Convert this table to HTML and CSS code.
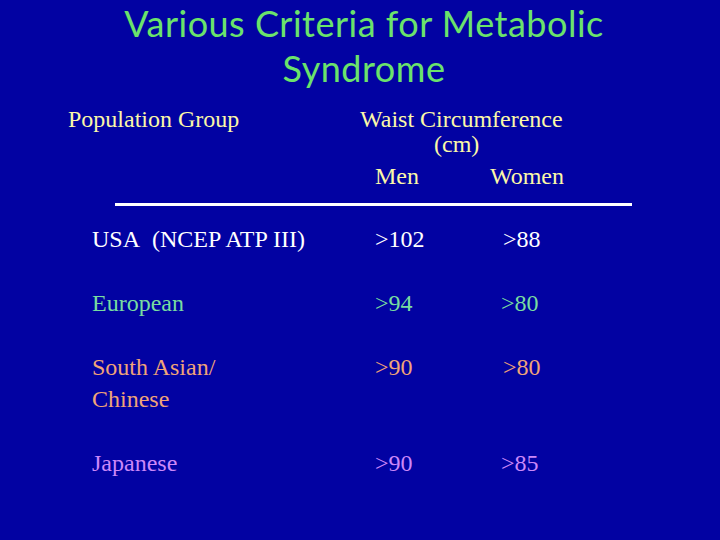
FILE: index.html
```html
<!DOCTYPE html>
<html>
<head>
<meta charset="utf-8">
<link rel="stylesheet" href="styles.css">
</head>
<body>
<div class="slide">
  <h1 class="title">Various Criteria for Metabolic<br>Syndrome</h1>
  <div class="head">
    <div class="pop">Population Group</div>
    <div class="waist">
      <div class="w1">Waist Circumference</div>
      <div class="w2">(cm)</div>
      <div class="sex"><span class="men">Men</span><span class="women">Women</span></div>
    </div>
  </div>
  <div class="rule"></div>
  <div class="rows">
    <div class="row c-white"><div class="grp">USA&nbsp; (NCEP ATP III)</div><div class="m">&gt;102</div><div class="w">&gt;88</div></div>
    <div class="row c-green"><div class="grp">European</div><div class="m">&gt;94</div><div class="w w-l">&gt;80</div></div>
    <div class="row c-orange"><div class="grp">South Asian/<br>Chinese</div><div class="m">&gt;90</div><div class="w">&gt;80</div></div>
    <div class="row c-purple"><div class="grp">Japanese</div><div class="m">&gt;90</div><div class="w w-l">&gt;85</div></div>
  </div>
</div>
</body>
</html>
```
FILE: styles.css
```css
html, body {
  margin: 0;
  padding: 0;
  background: #0202a2;
}
.slide {
  width: 720px;
  height: 540px;
  background: #0202a2;
  font-family: "Liberation Serif", "Times New Roman", serif;
  font-size: 24px;
  overflow: hidden;
}
.title {
  margin: 0;
  padding-top: 1px;
  padding-left: 8px;
  font-family: Lato, "Open Sans", sans-serif;
  font-weight: normal;
  font-size: 36px;
  letter-spacing: 0.5px;
  line-height: 45px;
  text-align: center;
  color: #6be36b;
}
.head {
  margin-top: 16px;
  display: flex;
  padding-left: 68px;
  color: #fbf8a8;
  line-height: 25px;
}
.pop {
  width: 292px;
}
.waist {
  width: 204px;
}
.w2 {
  padding-left: 74px;
}
.sex {
  margin-top: 7px;
  display: flex;
  justify-content: space-between;
  padding-left: 15px;
}
.rule {
  margin: 14px 0 0 115px;
  width: 517px;
  height: 3px;
  background: #ffffff;
}
.rows {
  margin-top: 17px;
  padding-left: 92px;
  display: flex;
  flex-direction: column;
  gap: 32px;
  line-height: 32px;
}
.row {
  display: flex;
}
.grp {
  width: 283px;
}
.m {
  width: 128px;
}
.w-l {
  margin-left: -2px;
}
.c-white { color: #ffffff; }
.c-green { color: #78dca0; }
.c-orange { color: #f0a478; }
.c-purple { color: #cc88f8; }
```
